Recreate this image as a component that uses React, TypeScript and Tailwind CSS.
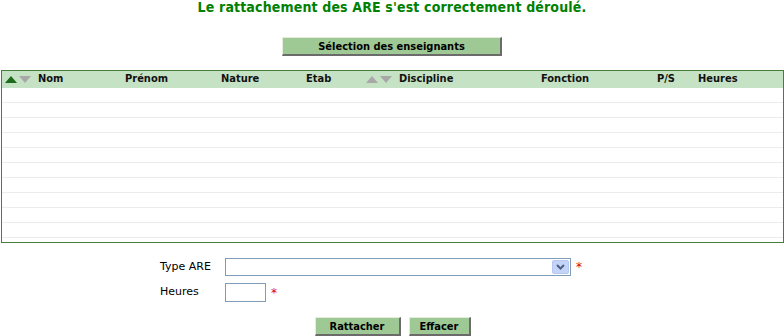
import React from "react";

const tahoma = { fontFamily: '"DejaVu Sans Condensed", "DejaVu Sans", sans-serif' };

function Up({ color }: { color: string }) {
  return (
    <svg width="12" height="7" viewBox="0 0 12 7" className="block">
      <polygon points="0,7 12,7 6,0" fill={color} />
    </svg>
  );
}
function Down({ color }: { color: string }) {
  return (
    <svg width="12" height="7" viewBox="0 0 12 7" className="block">
      <polygon points="0,0 12,0 6,7" fill={color} />
    </svg>
  );
}

function Btn({ label, w }: { label: string; w: string }) {
  return (
    <button
      className={`${w} h-[19px] bg-[#9ec894] border border-t-[#e4ecdc] border-l-[#e4ecdc] border-r-[#6b6b6b] border-b-[#6b6b6b] border-r-2 border-b-2 text-[11px] font-bold text-black leading-none flex items-center justify-center`}
      style={tahoma}
    >
      {label}
    </button>
  );
}

export default function App() {
  const rows = Array.from({ length: 10 });
  return (
    <div className="w-[784px] h-[336px] bg-white relative overflow-hidden" style={tahoma}>
      <div className="text-center text-[14px] font-bold tracking-[0.15px] leading-[15px] text-[#008000] pt-[0px]">
        Le rattachement des ARE s'est correctement déroulé.
      </div>
      <div className="flex justify-center mt-[22px]">
        <Btn label="Sélection des enseignants" w="w-[220px]" />
      </div>
      <div className="mt-[14px] ml-[1px] w-[783px] h-[173px] border border-[#4a7d3c] flex flex-col">
        <div className="h-[17px] bg-[#c5e2c5] flex items-center text-[11px] font-bold text-[#111]">
          <div className="w-[120px] flex items-center pl-[3px]">
            <Up color="#1d6b1d" />
            <span className="w-[2px]" />
            <Down color="#a8a8a8" />
            <span className="ml-[7px]">Nom</span>
          </div>
          <div className="w-[96px] pl-[3px]">Prénom</div>
          <div className="w-[85px] pl-[3px]">Nature</div>
          <div className="w-[60px] pl-[3px]">Etab</div>
          <div className="w-[175px] flex items-center pl-[3px]">
            <Up color="#a8a8a8" />
            <span className="w-[2px]" />
            <Down color="#a8a8a8" />
            <span className="ml-[7px]">Discipline</span>
          </div>
          <div className="w-[116px] pl-[3px]">Fonction</div>
          <div className="w-[41px] pl-[3px]">P/S</div>
          <div className="flex-1 pl-[3px]">Heures</div>
        </div>
        {rows.map((_, i) => (
          <div key={i} className="h-[15px] border-b border-[#ececec]" />
        ))}
      </div>
      <div className="ml-[160px] mt-[15px] flex flex-col text-[11px] text-black" style={{ fontFamily: '"DejaVu Sans", sans-serif' }}>
        <div className="flex items-center h-[18px]">
          <div className="w-[65px]">Type ARE</div>
          <div className="w-[346px] h-[18px] border border-[#7f9db9] bg-white flex justify-end items-center pr-[1px]">
            <div className="w-[17px] h-[14px] rounded-[2px] bg-[#c3d4f8] border border-[#b4c8f0] flex items-center justify-center">
              <svg width="9" height="6" viewBox="0 0 9 6">
                <polyline points="1,1 4.5,4.5 8,1" fill="none" stroke="#4d6185" strokeWidth="2" />
              </svg>
            </div>
          </div>
          <span className="ml-[5px] text-[#e00000] text-[12px]">*</span>
        </div>
        <div className="flex items-center h-[19px] mt-[7px]">
          <div className="w-[65px]">Heures</div>
          <div className="w-[41px] h-[19px] border border-[#7f9db9] bg-white" />
          <span className="ml-[5px] text-[#e00000] text-[12px]">*</span>
        </div>
      </div>
      <div className="flex justify-center gap-[8px] mt-[15px] ml-[1px]">
        <Btn label="Rattacher" w="w-[86px]" />
        <Btn label="Effacer" w="w-[62px]" />
      </div>
    </div>
  );
}
